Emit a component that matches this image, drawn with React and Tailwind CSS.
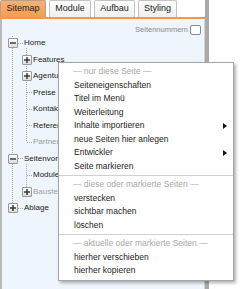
import React from "react";

const tabs = [
  { label: "Sitemap", w: "w-[46px]", active: true },
  { label: "Module", w: "w-[42px]" },
  { label: "Aufbau", w: "w-[41px]" },
  { label: "Styling", w: "w-[39px]" },
];

const tree = [
  { level: 0, box: "minus", label: "Home" },
  { level: 1, box: "plus", label: "Features" },
  { level: 1, box: "plus", label: "Agentur" },
  { level: 1, label: "Preise" },
  { level: 1, label: "Kontakt" },
  { level: 1, label: "Referenzen" },
  { level: 1, label: "Partner", muted: true },
  { level: 0, box: "minus", label: "Seitenvorlagen" },
  { level: 1, label: "Module" },
  { level: 1, box: "plus", label: "Bausteine", muted: true },
  { level: 0, box: "plus", label: "Ablage" },
];

const sections = [
  {
    title: "— nur diese Seite —",
    items: [
      { label: "Seiteneigenschaften" },
      { label: "Titel im Menü" },
      { label: "Weiterleitung" },
      { label: "Inhalte importieren", sub: true },
      { label: "neue Seiten hier anlegen" },
      { label: "Entwickler", sub: true },
      { label: "Seite markieren" },
    ],
  },
  {
    title: "— diese oder markierte Seiten —",
    items: [{ label: "verstecken" }, { label: "sichtbar machen" }, { label: "löschen" }],
  },
  {
    title: "— aktuelle oder markierte Seiten —",
    items: [{ label: "hierher verschieben" }, { label: "hierher kopieren" }],
  },
];

function ToggleBox({ type }) {
  return (
    <span className="w-[10px] h-[10px] shrink-0 border border-[#9a9a9a] rounded-[1px] bg-gradient-to-b from-white to-[#dcdcdc] flex items-center justify-center">
      <svg width="8" height="8" viewBox="0 0 8 8">
        <line x1="1" y1="4" x2="7" y2="4" stroke="#333" strokeWidth="1.4" />
        {type === "plus" && <line x1="4" y1="1" x2="4" y2="7" stroke="#333" strokeWidth="1.4" />}
      </svg>
    </span>
  );
}

function TreeRow({ level, box, label, muted }) {
  let pad = "pl-[6px]";
  if (level === 1) pad = box ? "pl-[20px]" : "pl-[31px]";
  return (
    <div className={`relative h-[16.5px] flex items-center ${pad}`}>
      {box && <ToggleBox type={box} />}
      <span
        className={`${box ? (level === 0 ? "ml-[6px]" : "ml-[1px]") : ""} text-[8px] leading-none whitespace-nowrap ${
          muted ? "text-[#a0a0a0]" : "text-[#222]"
        }`}
      >
        {label}
      </span>
    </div>
  );
}

function TreeLines() {
  const c = (i) => 8.25 + 16.5 * i;
  const leafRows = [3, 4, 5, 6, 8];
  const rootRows = [0, 7, 10];
  return (
    <svg className="absolute left-0 top-0" width="120" height="190">
      <g stroke="#a3a3a3" strokeWidth="1" strokeDasharray="1 1" fill="none">
        <line x1="10.5" y1="1" x2="10.5" y2={c(10) - 5} />
        <line x1="24.5" y1="13" x2="24.5" y2={c(6)} />
        <line x1="24.5" y1={c(7) + 5} x2="24.5" y2={c(9) - 5} />
        {leafRows.map((r) => (
          <line key={r} x1="25" y1={Math.floor(c(r)) + 0.5} x2="31" y2={Math.floor(c(r)) + 0.5} />
        ))}
        {rootRows.map((r) => (
          <line key={r} x1="16" y1={Math.floor(c(r)) + 0.5} x2="21" y2={Math.floor(c(r)) + 0.5} />
        ))}
      </g>
    </svg>
  );
}

export default function App() {
  return (
    <div className="relative w-[240px] h-[289px] bg-white overflow-hidden font-['Liberation_Sans',Arial,sans-serif]">
      <div className="w-[209px] h-full flex flex-col border-r-[4px] border-[#a9a9a9]">
        <div className="h-[17px] flex items-end gap-[3px] bg-white">
          {tabs.map((t) => (
            <div
              key={t.label}
              className={`${t.w} h-[17px] flex items-center justify-center border border-b-0 rounded-t-[2px] text-[9px] text-[#222] ${
                t.active
                  ? "bg-gradient-to-b from-[#f9b073] to-[#f59c52] border-[#b8a08a]"
                  : "bg-gradient-to-b from-white to-[#efefef] border-[#c4c4c4]"
              }`}
            >
              {t.label}
            </div>
          ))}
        </div>
        <div className="h-[2px] bg-[#f3974a]" />
        <div className="flex-1 bg-[#eef5fd] border-l-2 border-l-[#b9b9b9] border-r border-r-[#d4d4d4]">
          <div className="h-[16px] pt-[5px] pr-[3px] flex items-center justify-end gap-[2px]">
            <span className="text-[7.5px] text-[#8a8a8a] leading-none">Seitennummern</span>
            <span className="w-[11px] h-[10px] border border-[#8a8a8a] rounded-[2px] bg-white" />
          </div>
          <div className="relative">
            <TreeLines />
            <div className="relative">
              {tree.map((r) => (
                <TreeRow key={r.label} {...r} />
              ))}
            </div>
          </div>
        </div>
      </div>

      <div className="absolute left-[58px] top-[62px] w-[176px] bg-white border border-[#a6a6a6] shadow-[2px_2px_3px_rgba(0,0,0,0.3)] py-[2px]">
        {sections.map((s, i) => (
          <div key={s.title}>
            {i > 0 && <div className="my-[2px] border-t border-[#d0d0d0]" />}
            <div className="h-[13.5px] leading-[13.5px] pl-[14px] text-[8.5px] text-[#a8a8a8] whitespace-nowrap">
              {s.title}
            </div>
            {s.items.map((it) => (
              <div
                key={it.label}
                className="h-[13.5px] pl-[15px] pr-[6px] flex items-center justify-between text-[8.5px] text-[#1e1e1e] whitespace-nowrap"
              >
                <span>{it.label}</span>
                {it.sub && (
                  <span className="w-0 h-0 border-y-[3px] border-y-transparent border-l-[4px] border-l-[#111]" />
                )}
              </div>
            ))}
          </div>
        ))}
      </div>
    </div>
  );
}
